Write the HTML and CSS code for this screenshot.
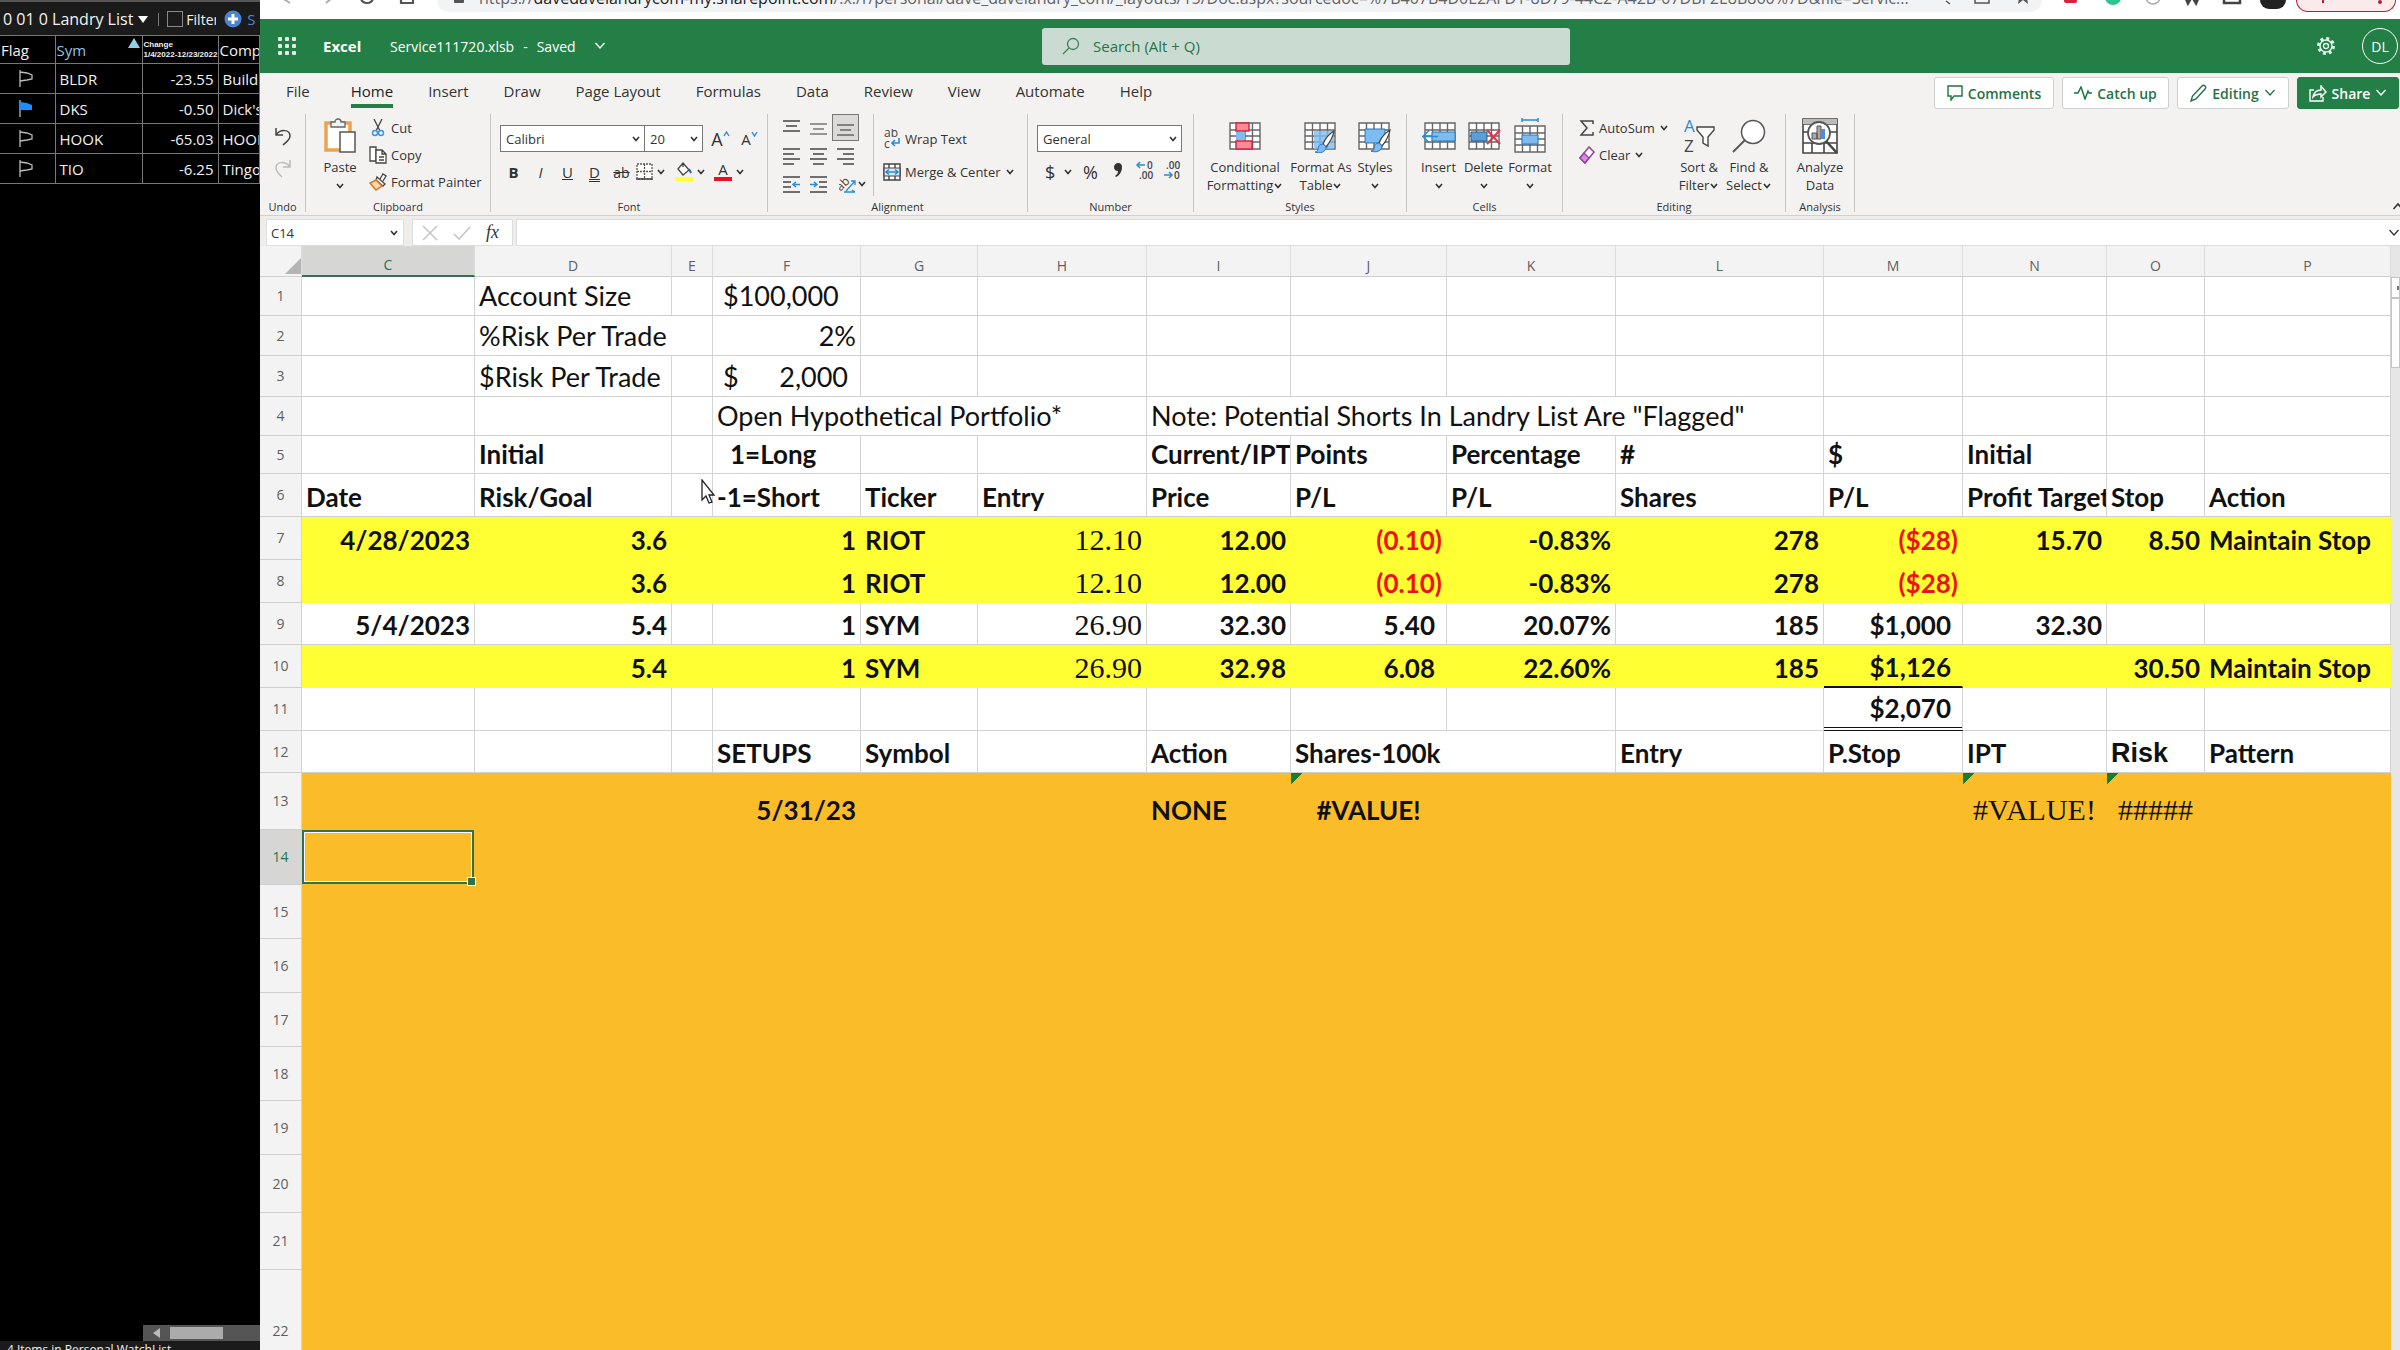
FILE: index.html
```
<!DOCTYPE html>
<html lang="en">
<head>
    <meta charset="UTF-8">
    <meta name="viewport" content="width=device-width, initial-scale=1.0">
    <title>Service111720.xlsb</title>
    <link rel="stylesheet" href="styles.css">
</head>
<body>
    <!-- Shared icons -->
    <svg class="defs" width="0" height="0" aria-hidden="true">
        <symbol id="chev" viewBox="0 0 10 8"><path d="M2 2l3 3.500 3-3.500" fill="none" stroke="currentColor" stroke-width="1.600"/></symbol>
        <symbol id="chevThin" viewBox="0 0 12 10"><path d="M1.500 2l4.500 5 4.500-5" fill="none" stroke="currentColor" stroke-width="1.300"/></symbol>
        <symbol id="flag" viewBox="0 0 16 20"><path d="M2 1v17M2 3l7 1 5 2v4l-5 1-7 1" fill="none" stroke="#bbb" stroke-width="1.300"/></symbol>
        <symbol id="grid" viewBox="0 0 32 28"><path d="M1 1h30v26H1zM1 8h30M1 14h30M1 20h30M8.500 1v26M16 1v26M23.500 1v26" fill="#fff" stroke="#666" stroke-width="1.400"/></symbol>
        <symbol id="brush" viewBox="0 0 20 24"><path d="M19 1C14 4 10 9 8 14l3 3c4-5 7-10 8-16z" fill="#fff" stroke="#444" stroke-width="1.300"/><path d="M8 14c-3 0-5 2-5 5 0 2-1 3-3 3 5 2 11 0 11-5z" fill="#7cbcf0" stroke="#2b78b8"/></symbol>
    </svg>

    <div class="screen">
        <!-- Watch list -->
        <aside class="watch">
            <div class="watch-bar">
                <button class="list-name">0 01 0 Landry List <span class="down"></span></button>
                <span class="bar-sep"></span>
                <label class="filter"><input type="checkbox"> Filter</label>
                <button class="add" aria-label="Add"><svg width="18" height="18" viewBox="0 0 18 18"><circle cx="9" cy="9" r="8.500" fill="#4a86cf"/><path d="M9 4v10M4 9h10" stroke="#fff" stroke-width="3"/></svg></button>
                <span class="cut-text">S</span>
            </div>
            <table class="watch-table">
                <colgroup><col class="w-flag"><col class="w-sym"><col class="w-chg"><col></colgroup>
                <thead>
                    <tr><th>Flag</th><th class="sorted">Sym<span class="up"></span></th><th class="chg">Change<br>1/4/2022-12/23/2022</th><th>Company</th></tr>
                </thead>
                <tbody>
                    <tr><td class="fl"><svg width="16" height="20"><use href="#flag"/></svg></td><td>BLDR</td><td class="n">-23.55</td><td class="co">Builders</td></tr>
                    <tr><td class="fl"><svg width="16" height="20" viewBox="0 0 16 20"><path d="M2 1v17" stroke="#bbb" stroke-width="1.300"/><path d="M2 3l7 1 5 2v5H2z" fill="#1e8cff"/></svg></td><td>DKS</td><td class="n">-0.50</td><td class="co">Dick's</td></tr>
                    <tr><td class="fl"><svg width="16" height="20"><use href="#flag"/></svg></td><td>HOOK</td><td class="n">-65.03</td><td class="co">HOOKIPA</td></tr>
                    <tr><td class="fl"><svg width="16" height="20"><use href="#flag"/></svg></td><td>TIO</td><td class="n">-6.25</td><td class="co">Tingo</td></tr>
                </tbody>
            </table>
            <div class="watch-space"></div>
            <div class="watch-scroll"><span class="left"></span><span class="thumb"></span></div>
            <div class="watch-status">4 Items in Personal WatchList</div>
        </aside>

        <main class="window">
            <!-- Browser bar -->
            <div class="browser">
                <div class="nav">
                    <svg width="150" height="18" viewBox="0 0 150 18"><path d="M14 3L6-2M50 3l6-5" fill="none" stroke="#aaa" stroke-width="1.800"/><path d="M85-2a6 5 0 0 0 12 0" fill="none" stroke="#555" stroke-width="2.200"/><path d="M125-6v9h12v-9" fill="none" stroke="#555" stroke-width="2.200"/></svg>
                </div>
                <div class="url">
                    <svg width="12" height="12" viewBox="0 0 12 12"><rect x="1" y="-6" width="10" height="9" rx="1" fill="#555"/></svg>
                    <span>https://<b>davedavelandrycom-my.sharepoint.com</b>/:x:/r/personal/dave_davelandry_com/_layouts/15/Doc.aspx?sourcedoc=%7B407B4D0E2AFD1-8D79-44C2-A42B-07DBF2E8B860%7D&amp;file=Servic...</span>
                    <svg class="url-tools" width="110" height="12" viewBox="0 0 110 12"><path d="M14 1l4 3M43-5v8h14v-8" fill="none" stroke="#555" stroke-width="1.500"/><path d="M86 4l5-4 5 4-1-6h-8z" fill="#555"/></svg>
                </div>
                <svg class="ext" width="184" height="18" viewBox="0 0 184 18"><rect x="0" y="-8" width="13" height="11" rx="2" fill="#d8213b"/><circle cx="49" cy="-3" r="8" fill="#2fc38d"/><circle cx="89" cy="-3" r="7" fill="none" stroke="#aaa" stroke-width="1.500"/><path d="M121-4l3 7 4-7 4 7 3-7" fill="none" stroke="#444" stroke-width="3"/><path d="M160-5h16v8h-16z" fill="none" stroke="#444" stroke-width="2.500"/></svg>
                <span class="face"></span>
                <span class="update"><svg width="98" height="12" viewBox="0 0 98 12"><path d="M26 0v3" stroke="#b5203a" stroke-width="2"/><circle cx="83" cy="2" r="2" fill="#b5203a"/></svg></span>
            </div>

            <!-- Title bar -->
            <header class="title">
                <button class="waffle" aria-label="App launcher"><svg width="18" height="18" viewBox="0 0 18 18" fill="#dff0e5"><rect width="4" height="4" rx="1"/><rect x="7" width="4" height="4" rx="1"/><rect x="14" width="4" height="4" rx="1"/><rect y="7" width="4" height="4" rx="1"/><rect x="7" y="7" width="4" height="4" rx="1"/><rect x="14" y="7" width="4" height="4" rx="1"/><rect y="14" width="4" height="4" rx="1"/><rect x="7" y="14" width="4" height="4" rx="1"/><rect x="14" y="14" width="4" height="4" rx="1"/></svg></button>
                <strong>Excel</strong>
                <button class="doc"><span>Service111720.xlsb</span><span>-</span><span>Saved</span><svg width="12" height="10"><use href="#chevThin"/></svg></button>
                <label class="search">
                    <svg width="18" height="18" viewBox="0 0 18 18"><circle cx="11" cy="7" r="5.500" fill="none" stroke="#3f7f5b" stroke-width="1.300"/><path d="M7 11l-6 6" stroke="#3f7f5b" stroke-width="1.300"/></svg>
                    <input type="text" placeholder="Search (Alt + Q)" aria-label="Search">
                </label>
                <button class="gear" aria-label="Settings"><svg width="20" height="20" viewBox="0 0 20 20" fill="none" stroke="#e4f3ea"><circle cx="10" cy="10" r="7.500" stroke-width="3" stroke-dasharray="3 2.890"/><circle cx="10" cy="10" r="6" stroke-width="1.500"/><circle cx="10" cy="10" r="2.500" stroke-width="1.300"/></svg></button>
                <button class="avatar">DL</button>
            </header>

            <!-- Ribbon tabs -->
            <nav class="tabs">
                <a class="file" href="#">File</a>
                <a class="active" href="#">Home</a>
                <a href="#">Insert</a>
                <a href="#">Draw</a>
                <a href="#">Page Layout</a>
                <a href="#">Formulas</a>
                <a href="#">Data</a>
                <a href="#">Review</a>
                <a href="#">View</a>
                <a href="#">Automate</a>
                <a href="#">Help</a>
                <div class="actions">
                    <button class="act w120"><svg width="16" height="16" viewBox="0 0 16 16"><path d="M1 1h14v10H7l-3 4v-4H1z" fill="none" stroke="currentColor" stroke-width="1.400"/></svg>Comments</button>
                    <button class="act w107"><svg width="18" height="14" viewBox="0 0 18 14"><path d="M0 7h4l3-6 4 12 3-8 1 2h3" fill="none" stroke="currentColor" stroke-width="1.500"/></svg>Catch up</button>
                    <button class="act w112"><svg width="17" height="18" viewBox="0 0 17 18"><path d="M1 17l1.500-5L12 2c1-1 2-1 3 0s1 2 0 3L6 15z" fill="none" stroke="currentColor" stroke-width="1.400"/></svg>Editing<svg width="12" height="10"><use href="#chevThin"/></svg></button>
                    <button class="act share"><svg width="18" height="17" viewBox="0 0 18 17"><path d="M5 5H1v11h13v-4M4 12c1-5 4-7 8-7V1l5 6-5 5V9c-4 0-6 1-8 3z" fill="none" stroke="currentColor" stroke-width="1.400"/></svg>Share<svg width="12" height="10"><use href="#chevThin"/></svg></button>
                </div>
            </nav>

            <!-- Ribbon -->
            <div class="ribbon">
                <section class="group g-undo">
                    <div class="body col">
                        <button class="tall" aria-label="Undo"><svg width="18" height="20" viewBox="0 0 18 20"><path d="M2 2v7h7M2 9c4-6 14-6 14 1 0 4-4 6-7 9" fill="none" stroke="#444" stroke-width="1.500"/></svg></button>
                        <button class="tall" aria-label="Redo"><svg width="18" height="20" viewBox="0 0 18 20"><path d="M16 2v7H9M16 9C12 3 2 3 2 10c0 4 3 6 6 9" fill="none" stroke="#bbb" stroke-width="1.500"/></svg></button>
                    </div>
                    <div class="label">Undo</div>
                </section>

                <section class="group g-clip">
                    <div class="body">
                        <button class="big w58"><span class="ico"><svg width="34" height="36" viewBox="0 0 34 36"><path d="M3 5h24v27H3z" fill="#fff" stroke="#eda24f" stroke-width="3.500"/><path d="M8 9V4h4c0-4 6-4 6 0h4v5z" fill="#f3f2f1" stroke="#666" stroke-width="1.300"/><rect x="17" y="14" width="15" height="20" fill="#fff" stroke="#555" stroke-width="1.500"/></svg></span>Paste<svg width="10" height="8"><use href="#chev"/></svg></button>
                        <div class="col">
                            <button class="line"><svg width="18" height="18" viewBox="0 0 18 18"><path d="M5 0l6 12M13 0L7 12" stroke="#444" stroke-width="1.300"/><circle cx="6" cy="14" r="2.500" fill="none" stroke="#3c96dc" stroke-width="1.400"/><circle cx="12" cy="14" r="2.500" fill="none" stroke="#3c96dc" stroke-width="1.400"/></svg>Cut</button>
                            <button class="line"><svg width="18" height="18" viewBox="0 0 18 18"><path d="M1 1h6v14H1z" fill="#fff" stroke="#444" stroke-width="1.300"/><path d="M7 4h6l4 4v9H7zM13 4v4h4M10 11h5M10 14h5" fill="#fff" stroke="#444" stroke-width="1.300"/></svg>Copy</button>
                            <button class="line"><svg width="18" height="18" viewBox="0 0 18 18"><path d="M11 6l3-5 3 2-3 5" fill="#fff" stroke="#444" stroke-width="1.300"/><path d="M8 4l8 7-2 2-7-6z" fill="#fff" stroke="#444" stroke-width="1.300"/><path d="M7 7L1 10l6 7 6-4z" fill="#fbd9b0" stroke="#dd7520" stroke-width="1.500"/></svg>Format Painter</button>
                        </div>
                    </div>
                    <div class="label">Clipboard</div>
                </section>

                <section class="group g-font">
                    <div class="body col pad">
                        <div class="row">
                            <div class="pick w144"><select aria-label="Font"><option>Calibri</option></select><svg width="10" height="8"><use href="#chev"/></svg></div>
                            <div class="pick size"><select aria-label="Font size"><option>20</option></select><svg width="10" height="8"><use href="#chev"/></svg></div>
                            <button class="b27 grow" aria-label="Increase font size">A<svg width="7" height="6" viewBox="0 0 7 6"><path d="M1 5l2.500-4L6 5" fill="none" stroke="#2d8bd3" stroke-width="1.400"/></svg></button>
                            <button class="b27 shrink" aria-label="Decrease font size">A<svg width="7" height="6" viewBox="0 0 7 6"><path d="M1 1l2.500 4L6 1" fill="none" stroke="#2d8bd3" stroke-width="1.400"/></svg></button>
                        </div>
                        <div class="row second">
                            <button class="b27"><b>B</b></button>
                            <button class="b27"><i>I</i></button>
                            <button class="b27"><u>U</u></button>
                            <button class="b27"><span class="dbl">D</span></button>
                            <button class="b27"><s>ab</s></button>
                            <button class="b38" aria-label="Borders"><svg width="17" height="17" viewBox="0 0 17 17"><path d="M1 1h15v15H1zM8.500 1v15M1 8.500h15" fill="#fff" stroke="#555" stroke-width="1.300" stroke-dasharray="2 1"/><path d="M0 16h17" stroke="#444" stroke-width="1.500"/></svg><svg width="10" height="8"><use href="#chev"/></svg></button>
                            <button class="b38" aria-label="Fill colour"><svg width="18" height="20" viewBox="0 0 18 20"><path d="M8 1l6 7-6 5-5-6zM8 1v4" fill="#fff" stroke="#444" stroke-width="1.300"/><path d="M14 7l2 4" stroke="#2b5fb8" stroke-width="2"/><path d="M0 15h18v4H0z" fill="#ff3"/></svg><svg width="10" height="8"><use href="#chev"/></svg></button>
                            <button class="b38" aria-label="Font colour"><span class="fcol">A</span><svg width="10" height="8"><use href="#chev"/></svg></button>
                        </div>
                    </div>
                    <div class="label">Font</div>
                </section>

                <section class="group g-align">
                    <div class="body">
                        <div class="aligns">
                            <button aria-label="Top align"><svg width="17" height="17" viewBox="0 0 17 17"><path d="M0 2h17M3 7h11M0 12h17" stroke="#444" stroke-width="1.500"/></svg></button>
                            <button aria-label="Middle align"><svg width="17" height="17" viewBox="0 0 17 17"><path d="M0 5h17M3 10h11M0 15h17" stroke="#777" stroke-width="1.300"/></svg></button>
                            <button class="on" aria-label="Bottom align"><svg width="17" height="17" viewBox="0 0 17 17"><path d="M0 6h17M3 11h11M0 16h17" stroke="#666" stroke-width="1.300"/></svg></button>
                            <button aria-label="Align left"><svg width="17" height="17" viewBox="0 0 17 17"><path d="M0 1h17M0 6h11M0 11h17M0 16h11" stroke="#444" stroke-width="1.400"/></svg></button>
                            <button aria-label="Center"><svg width="17" height="17" viewBox="0 0 17 17"><path d="M0 1h17M3 6h11M0 11h17M3 16h11" stroke="#444" stroke-width="1.400"/></svg></button>
                            <button aria-label="Align right"><svg width="17" height="17" viewBox="0 0 17 17"><path d="M0 1h17M6 6h11M0 11h17M6 16h11" stroke="#444" stroke-width="1.400"/></svg></button>
                            <button aria-label="Decrease indent"><svg width="17" height="17" viewBox="0 0 17 17"><path d="M0 1h17M0 6h8M0 11h8M0 16h17" stroke="#444" stroke-width="1.400"/><path d="M17 8.500h-6M13 6l-3 2.500 3 2.500" fill="none" stroke="#2d8bd3" stroke-width="1.500"/></svg></button>
                            <button aria-label="Increase indent"><svg width="17" height="17" viewBox="0 0 17 17"><path d="M0 1h17M9 6h8M9 11h8M0 16h17" stroke="#444" stroke-width="1.400"/><path d="M0 8.500h6M4 6l3 2.500L4 11" fill="none" stroke="#2d8bd3" stroke-width="1.500"/></svg></button>
                            <button class="orient" aria-label="Orientation"><svg width="18" height="18" viewBox="0 0 18 18"><text x="-3" y="12" transform="rotate(-45 5 9)" font-size="12" fill="#444">ab</text><path d="M7 16L16 6m-4 0h4v4M5 17h11m-3-2l3 2" fill="none" stroke="#2d8bd3" stroke-width="1.300"/></svg><svg width="10" height="8"><use href="#chev"/></svg></button>
                        </div>
                        <div class="col wrap">
                            <button class="line"><svg width="18" height="20" viewBox="0 0 18 20"><text x="1" y="8" font-size="12" fill="#444">ab</text><text x="1" y="19" font-size="12" fill="#444">c</text><path d="M16 9v5H9m3-3l-3 3 3 3" fill="none" stroke="#2d8bd3" stroke-width="1.600"/></svg>Wrap Text</button>
                            <button class="line"><svg width="18" height="18" viewBox="0 0 18 18"><path d="M1 1h16v16H1zM6 1v16M12 1v16" fill="#fff" stroke="#444" stroke-width="1.400"/><path d="M1 5h16v8H1z" fill="#d5eafa" stroke="#444" stroke-width="1.200"/><path d="M3 9h12M6 6.500L3 9l3 2.500M12 6.500L15 9l-3 2.500" fill="none" stroke="#2d8bd3" stroke-width="1.500"/></svg>Merge &amp; Center <svg width="10" height="8"><use href="#chev"/></svg></button>
                        </div>
                    </div>
                    <div class="label">Alignment</div>
                </section>

                <section class="group g-num">
                    <div class="body col pad">
                        <div class="row"><div class="pick w144"><select aria-label="Number format"><option>General</option></select><svg width="10" height="8"><use href="#chev"/></svg></div></div>
                        <div class="row second">
                            <button class="b38 sym">$<svg width="10" height="8"><use href="#chev"/></svg></button>
                            <button class="b27 pct">%</button>
                            <button class="b27" aria-label="Comma style"><svg width="10" height="16" viewBox="0 0 10 16"><path d="M5 1c3 0 4 2 4 4 0 4-2 8-6 10l-1-1c2-1 3-3 3-5-3 0-4-2-4-4s2-4 4-4z" fill="#333"/></svg></button>
                            <button class="b27" aria-label="Increase decimal"><svg width="18" height="20" viewBox="0 0 18 20"><text x="11" y="9" font-size="10" font-weight="600" fill="#444">0</text><text x="3" y="19" font-size="10" font-weight="600" fill="#444">.00</text><path d="M9 5H1m3-3L1 5l3 3" fill="none" stroke="#2d8bd3" stroke-width="1.500"/></svg></button>
                            <button class="b27" aria-label="Decrease decimal"><svg width="18" height="20" viewBox="0 0 18 20"><text x="3" y="9" font-size="10" font-weight="600" fill="#444">.00</text><text x="11" y="19" font-size="10" font-weight="600" fill="#444">0</text><path d="M1 15h8m-3-3l3 3-3 3" fill="none" stroke="#2d8bd3" stroke-width="1.500"/></svg></button>
                        </div>
                    </div>
                    <div class="label">Number</div>
                </section>

                <section class="group g-styles">
                    <div class="body">
                        <button class="big w84"><span class="ico"><svg width="32" height="28" viewBox="0 0 32 28"><use href="#grid"/><path d="M7 1h13v8H7zM7 19h16v8H7z" fill="#f98a96" stroke="#d2243c" stroke-width="1.400"/><path d="M7 10h9v8H7z" fill="#7cbcf0"/></svg></span>Conditional<span>Formatting<svg width="10" height="8"><use href="#chev"/></svg></span></button>
                        <button class="big w68"><span class="ico"><svg width="34" height="34" viewBox="0 0 34 34"><svg y="3" width="32" height="28"><use href="#grid"/></svg><path d="M10 12h20v18H10z" fill="#7cbcf0" opacity="0.800"/><svg x="9" y="11" width="24" height="24" viewBox="0 0 20 24"><use href="#brush"/></svg></svg></span>Format As<span>Table<svg width="10" height="8"><use href="#chev"/></svg></span></button>
                        <button class="big w40"><span class="ico"><svg width="34" height="34" viewBox="0 0 34 34"><svg y="3" width="32" height="28"><use href="#grid"/></svg><path d="M7 10h20v14H7z" fill="#7cbcf0" stroke="#2b78b8"/><svg x="11" y="10" width="24" height="24" viewBox="0 0 20 24"><use href="#brush"/></svg></svg></span>Styles<svg width="10" height="8"><use href="#chev"/></svg></button>
                    </div>
                    <div class="label">Styles</div>
                </section>

                <section class="group g-cells">
                    <div class="body">
                        <button class="big w45"><span class="ico"><svg width="34" height="28" viewBox="0 0 34 28"><svg x="2" width="32" height="28"><use href="#grid"/></svg><path d="M10 10h23v9H10z" fill="#7cbcf0" stroke="#2b78b8"/><path d="M16 14.500H1m6-6l-6 6 6 6" fill="none" stroke="#2d8bd3" stroke-width="1.600"/></svg></span>Insert<svg width="10" height="8"><use href="#chev"/></svg></button>
                        <button class="big w45"><span class="ico"><svg width="34" height="28" viewBox="0 0 34 28"><use href="#grid"/><path d="M4 10h16v9H4z" fill="#5a9fd8" stroke="#2b5f88"/><path d="M20 8l13 14M33 8L20 22" stroke="#e0334b" stroke-width="2"/></svg></span>Delete<svg width="10" height="8"><use href="#chev"/></svg></button>
                        <button class="big w48"><span class="ico"><svg width="32" height="36" viewBox="0 0 32 36"><svg y="7" width="32" height="28"><use href="#grid"/></svg><path d="M8 17h16v9H8z" fill="#7cbcf0" stroke="#2b78b8"/><path d="M8 2h16M8 0v4M24 0v4" stroke="#2d8bd3" stroke-width="1.500"/></svg></span>Format<svg width="10" height="8"><use href="#chev"/></svg></button>
                    </div>
                    <div class="label">Cells</div>
                </section>

                <section class="group g-edit">
                    <div class="body">
                        <div class="col w95">
                            <button class="line"><svg width="16" height="16" viewBox="0 0 16 16"><path d="M14 4V1H2l6 7-6 7h12v-3" fill="none" stroke="#444" stroke-width="1.500"/></svg>AutoSum <svg width="10" height="8"><use href="#chev"/></svg></button>
                            <button class="line"><svg width="16" height="18" viewBox="0 0 16 18"><path d="M1 12L10 1l5 5-9 11z" fill="#fff" stroke="#9b3aa5" stroke-width="1.500"/><path d="M1 12l4-5 5 5-4 5z" fill="#d58be0" stroke="#9b3aa5" stroke-width="1.300"/></svg>Clear<svg width="10" height="8"><use href="#chev"/></svg></button>
                        </div>
                        <button class="big w50"><span class="ico"><svg width="34" height="34" viewBox="0 0 34 34"><text x="2" y="13" font-size="17" fill="#2d8bd3">A</text><text x="2" y="33" font-size="17" fill="#444">Z</text><path d="M15 8h17v3l-6 7v9l-5-3v-6l-6-7z" fill="#fff" stroke="#444" stroke-width="1.400"/></svg></span>Sort &amp;<span>Filter<svg width="10" height="8"><use href="#chev"/></svg></span></button>
                        <button class="big w50"><span class="ico"><svg width="34" height="34" viewBox="0 0 34 34"><circle cx="21" cy="13" r="11.500" fill="#fff" stroke="#555" stroke-width="1.500"/><path d="M13 21L1 33" stroke="#555" stroke-width="1.800"/></svg></span>Find &amp;<span>Select<svg width="10" height="8"><use href="#chev"/></svg></span></button>
                    </div>
                    <div class="label">Editing</div>
                </section>

                <section class="group g-ana">
                    <div class="body">
                        <button class="big w68"><span class="ico"><svg width="36" height="36" viewBox="0 0 36 36"><path d="M1 1h34v34H1zM1 6h34M1 14h34M1 25h34M10 25v10M22 25v10" fill="#fff" stroke="#444" stroke-width="1.600"/><path d="M1 1h34v5H1z" fill="#bbb"/><circle cx="17" cy="15" r="11" fill="#fff" stroke="#555" stroke-width="1.800"/><path d="M24 23l11 12" stroke="#444" stroke-width="2.500"/><path d="M10 15h5v6h-5zM15 8h4v13h-4z" fill="#aaa" stroke="#555"/><path d="M19 11h4v10h-4z" fill="#4a90e2"/></svg></span>Analyze<span>Data</span></button>
                    </div>
                    <div class="label">Analysis</div>
                </section>
                <button class="collapse" aria-label="Collapse ribbon"><svg width="12" height="10" viewBox="0 0 12 10"><path d="M1.500 8L6 3l4.500 5" fill="none" stroke="#333" stroke-width="1.600"/></svg></button>
            </div>

            <!-- Formula bar -->
            <div class="formula">
                <div class="name-box"><input type="text" value="C14" aria-label="Name box"><svg width="10" height="8"><use href="#chev"/></svg></div>
                <div class="fx">
                    <button aria-label="Cancel"><svg width="16" height="16" viewBox="0 0 16 16"><path d="M1 1l14 14M15 1L1 15" stroke="#c4c4c4" stroke-width="1.500"/></svg></button>
                    <button aria-label="Enter"><svg width="18" height="14" viewBox="0 0 18 14"><path d="M1 8l5 5L17 1" fill="none" stroke="#c4c4c4" stroke-width="1.500"/></svg></button>
                    <button class="fn">fx</button>
                </div>
                <input class="formula-input" type="text" aria-label="Formula">
                <svg class="expand" width="12" height="10"><use href="#chevThin"/></svg>
            </div>

            <!-- Sheet -->
            <div class="sheet">
                <table class="cells">
                    <colgroup>
                        <col class="c-head"><col class="c-c"><col class="c-d"><col class="c-e"><col class="c-f"><col class="c-g"><col class="c-h"><col class="c-i"><col class="c-j"><col class="c-k"><col class="c-l"><col class="c-m"><col class="c-n"><col class="c-o"><col>
                    </colgroup>
                    <thead>
                        <tr><th class="corner"><span></span></th><th class="sel">C</th><th>D</th><th>E</th><th>F</th><th>G</th><th>H</th><th>I</th><th>J</th><th>K</th><th>L</th><th>M</th><th>N</th><th>O</th><th class="cut">P</th></tr>
                    </thead>
                    <tbody>
                        <tr><th>1</th><td></td><td>Account Size</td><td></td><td class="acct">$100,000</td><td></td><td></td><td></td><td></td><td></td><td></td><td></td><td></td><td></td><td></td></tr>
                        <tr><th>2</th><td></td><td colspan="2">%Risk Per Trade</td><td class="r">2%</td><td></td><td></td><td></td><td></td><td></td><td></td><td></td><td></td><td></td><td></td></tr>
                        <tr><th>3</th><td></td><td>$Risk Per Trade</td><td></td><td class="acct"><div class="money"><span>$</span><span>2,000</span></div></td><td></td><td></td><td></td><td></td><td></td><td></td><td></td><td></td><td></td><td></td></tr>
                        <tr><th>4</th><td></td><td></td><td></td><td colspan="3">Open Hypothetical Portfolio*</td><td colspan="4">Note: Potential Shorts In Landry List Are "Flagged"</td><td></td><td></td><td></td><td></td></tr>
                        <tr class="bold"><th>5</th><td></td><td>Initial</td><td></td><td class="indent">1=Long</td><td></td><td></td><td>Current/IPT</td><td>Points</td><td>Percentage</td><td>#</td><td>$</td><td>Initial</td><td></td><td></td></tr>
                        <tr class="bold"><th>6</th><td>Date</td><td>Risk/Goal</td><td></td><td>-1=Short</td><td>Ticker</td><td>Entry</td><td>Price</td><td>P/L</td><td>P/L</td><td>Shares</td><td>P/L</td><td>Profit Target</td><td>Stop</td><td>Action</td></tr>
                        <tr class="bold yellow"><th>7</th><td class="r">4/28/2023</td><td class="r">3.6</td><td></td><td class="r">1</td><td>RIOT</td><td class="r serif">12.10</td><td class="r">12.00</td><td class="r red">(0.10)</td><td class="r">-0.83%</td><td class="r">278</td><td class="r red">($28)</td><td class="r">15.70</td><td class="r">8.50</td><td>Maintain Stop</td></tr>
                        <tr class="bold yellow"><th>8</th><td></td><td class="r">3.6</td><td></td><td class="r">1</td><td>RIOT</td><td class="r serif">12.10</td><td class="r">12.00</td><td class="r red">(0.10)</td><td class="r">-0.83%</td><td class="r">278</td><td class="r red">($28)</td><td></td><td></td><td></td></tr>
                        <tr class="bold"><th>9</th><td class="r">5/4/2023</td><td class="r">5.4</td><td></td><td class="r">1</td><td>SYM</td><td class="r serif">26.90</td><td class="r">32.30</td><td class="r pos">5.40</td><td class="r">20.07%</td><td class="r">185</td><td class="r pos">$1,000</td><td class="r">32.30</td><td></td><td></td></tr>
                        <tr class="bold yellow"><th>10</th><td></td><td class="r">5.4</td><td></td><td class="r">1</td><td>SYM</td><td class="r serif">26.90</td><td class="r">32.98</td><td class="r pos">6.08</td><td class="r">22.60%</td><td class="r">185</td><td class="r pos last">$1,126</td><td></td><td class="r">30.50</td><td>Maintain Stop</td></tr>
                        <tr class="bold"><th>11</th><td></td><td></td><td></td><td></td><td></td><td></td><td></td><td></td><td></td><td></td><td class="r pos total">$2,070</td><td></td><td></td><td></td></tr>
                        <tr class="bold"><th>12</th><td></td><td></td><td></td><td>SETUPS</td><td>Symbol</td><td></td><td>Action</td><td colspan="2">Shares-100k</td><td>Entry</td><td>P.Stop</td><td>IPT</td><td class="sans">Risk</td><td>Pattern</td></tr>
                        <tr class="bold orange"><th>13</th><td></td><td></td><td></td><td class="r">5/31/23</td><td></td><td></td><td>NONE</td><td class="mid err">#VALUE!</td><td></td><td></td><td></td><td class="mid err serif">#VALUE!</td><td class="mid err serif">#####</td><td></td></tr>
                        <tr class="orange"><th class="sel">14</th><td class="picked"><div class="cursor-box"></div></td><td colspan="13"></td></tr>
                        <tr class="orange"><th>15</th><td colspan="14"></td></tr>
                        <tr class="orange"><th>16</th><td colspan="14"></td></tr>
                        <tr class="orange"><th>17</th><td colspan="14"></td></tr>
                        <tr class="orange"><th>18</th><td colspan="14"></td></tr>
                        <tr class="orange"><th>19</th><td colspan="14"></td></tr>
                        <tr class="orange"><th>20</th><td colspan="14"></td></tr>
                        <tr class="orange"><th>21</th><td colspan="14"></td></tr>
                        <tr class="orange"><th>22</th><td colspan="14"></td></tr>
                    </tbody>
                </table>
                <div class="scroll"><span class="scroll-up"></span><span class="scroll-thumb"></span></div>
                <svg class="pointer" width="14" height="26" viewBox="0 0 14 26"><path d="M1 1v20l4-4 3 7 3-1-3-7h5z" fill="#fff" stroke="#222" stroke-width="1.300"/></svg>
            </div>
        </main>
    </div>
</body>
</html>
```
FILE: styles.css
```
* {
    box-sizing: border-box;
}
body {
    margin: 0;
    height: 100vh;
    overflow: hidden;
    font-family: "Open Sans", "Noto Sans", sans-serif;
    font-size: 13px;
    color: #333;
    background-color: #000;
}
button {
    font: inherit;
    color: inherit;
    background: none;
    border: 0;
    padding: 0;
    cursor: pointer;
}
input, select {
    font: inherit;
    color: inherit;
}
svg {
    flex: none;
}
.defs {
    position: absolute;
}
.screen {
    display: flex;
    height: 100vh;
}

/* Watch list */
.watch {
    width: 260px;
    flex: none;
    display: flex;
    flex-direction: column;
    overflow: hidden;
    color: #f2f2f2;
    font-family: "Open Sans", "Noto Sans", sans-serif;
    font-size: 15px;
}
.watch-bar {
    display: flex;
    align-items: center;
    height: 35px;
    padding: 1px 0 0 3px;
    background-color: #1b1b1b;
    border-top: 2px solid #555;
    white-space: nowrap;
}
.list-name {
    display: flex;
    align-items: center;
    gap: 5px;
    font-size: 16px;
}
.down {
    border: 5px solid transparent;
    border-top: 7px solid #fff;
    border-bottom: 0;
}
.bar-sep {
    width: 1px;
    height: 13px;
    margin: 0 8px 0 10px;
    background-color: #777;
}
.filter {
    display: flex;
    align-items: center;
    gap: 3px;
    width: 49px;
    overflow: hidden;
    font-size: 14px;
}
.filter input {
    appearance: none;
    flex: none;
    width: 16px;
    height: 16px;
    margin: 0;
    border: 1px solid #888;
}
.add {
    display: flex;
    margin: 0 5px 0 8px;
}
.cut-text {
    color: #4a86cf;
}
.watch-table {
    width: 100%;
    table-layout: fixed;
    border-collapse: collapse;
}
.w-flag { width: 55px; }
.w-sym { width: 87px; }
.w-chg { width: 76px; }
.watch-table th, .watch-table td {
    height: 30px;
    padding: 0 4px;
    border: 1px solid #777;
    border-left: 0;
    text-align: left;
    font-weight: normal;
    overflow: hidden;
    white-space: nowrap;
}
.watch-table th {
    height: 28px;
    padding: 0 1px;
}
.watch-table .sorted {
    position: relative;
    color: #8cc4e6;
}
.up {
    position: absolute;
    right: 2px;
    top: 2px;
    border: 6px solid transparent;
    border-top: 0;
    border-bottom: 10px solid #8fd0e8;
}
.watch-table .chg {
    font: bold 8px/10px "Liberation Sans Narrow", "Liberation Sans", sans-serif;
}
.watch-table .n {
    text-align: right;
}
.watch-table .fl {
    padding-left: 18px;
}
.fl svg {
    display: block;
}
.watch-space {
    flex: 1;
}
.watch-scroll {
    display: flex;
    align-items: center;
    gap: 10px;
    height: 16px;
    margin-left: 143px;
    padding-left: 10px;
    background-color: #555;
}
.left {
    border: 5px solid transparent;
    border-left: 0;
    border-right: 7px solid #bbb;
}
.thumb {
    width: 53px;
    height: 12px;
    background-color: #ababab;
}
.watch-status {
    height: 9px;
    padding-left: 7px;
    line-height: 17px;
    font-size: 12px;
    background-color: #1b1b1b;
    overflow: hidden;
}

/* Browser bar */
.window {
    flex: 1;
    min-width: 0;
    display: flex;
    flex-direction: column;
    background-color: #f3f2f1;
}
.browser {
    display: flex;
    height: 19px;
    background-color: #fff;
    overflow: hidden;
}
.nav {
    width: 177px;
    padding-left: 16px;
}
.url {
    flex: 1;
    display: flex;
    gap: 14px;
    height: 12px;
    padding-left: 16px;
    border-radius: 0 0 14px 14px;
    background-color: #f1f3f4;
    white-space: nowrap;
    color: #5f6368;
}
.url span {
    flex: 1;
    overflow: hidden;
    margin-top: -13px;
    font-size: 16px;
    line-height: 22px;
}
.url b {
    font-weight: normal;
    color: #202124;
}
.ext {
    margin-left: 22px;
}
.face {
    width: 26px;
    height: 9px;
    margin-left: 12px;
    border-radius: 0 0 13px 13px;
    background-color: #222;
}
.update {
    width: 100px;
    height: 12px;
    margin: 0 4px 0 10px;
    border: 1px solid #b5203a;
    border-top: 0;
    border-radius: 0 0 14px 14px;
    background-color: #fbeaec;
}
.update svg {
    display: block;
}

/* Title bar */
.title {
    display: flex;
    align-items: center;
    height: 54px;
    padding-left: 18px;
    color: #fff;
    background-color: #237f46;
    font-size: 14px;
}
.waffle {
    display: flex;
    margin-right: 27px;
}
.title strong {
    width: 67px;
    font-size: 15px;
}
.doc {
    display: flex;
    align-items: center;
    gap: 9px;
    width: 652px;
}
.doc svg {
    margin-left: 9px;
}
.search {
    display: flex;
    align-items: center;
    gap: 13px;
    width: 528px;
    height: 37px;
    padding-left: 20px;
    border-radius: 3px;
    background-color: #cadcd1;
    font-size: 15px;
}
.search input {
    flex: 1;
    border: 0;
    padding: 0;
    background: none;
    outline: none;
}
.search input::placeholder {
    color: #2c7249;
}
.gear {
    display: flex;
    margin: 0 26px 0 auto;
}
.avatar {
    width: 36px;
    height: 36px;
    margin-right: 2px;
    border: 1px solid #fff;
    border-radius: 50%;
}

/* Tabs */
.tabs {
    display: flex;
    gap: 35px;
    height: 41px;
    padding-left: 26px;
    font-size: 15px;
}
.tabs a {
    height: 35px;
    line-height: 36px;
    color: #333;
    text-decoration: none;
    white-space: nowrap;
}
.tabs .file {
    margin-right: 6px;
}
.tabs .active {
    border-bottom: 4px solid #237f46;
    color: #222;
}
.actions {
    display: flex;
    gap: 8px;
    margin: 4px 1px 0 auto;
    font-size: 14px;
}
.act {
    display: flex;
    align-items: center;
    justify-content: center;
    gap: 5px;
    height: 32px;
    border: 1px solid #d0d0d0;
    border-radius: 3px;
    color: #1f7344;
    background-color: #fff;
    font-weight: 600;
}
.w120 { width: 120px; }
.w107 { width: 107px; }
.w112 { width: 112px; }
.share {
    width: 102px;
    border-color: #237f46;
    color: #fff;
    background-color: #237f46;
}

/* Ribbon */
.ribbon {
    display: flex;
    height: 102px;
    border-bottom: 1px solid #d2d0ce;
}
.group {
    height: 98px;
    border-right: 1px solid #c8c6c4;
}
.g-undo { width: 46px; }
.g-clip { width: 185px; }
.g-font { width: 277px; }
.g-align { width: 260px; }
.g-num { width: 166px; }
.g-styles { width: 213px; }
.g-cells { width: 156px; }
.g-edit { width: 223px; }
.g-ana { width: 69px; }
.body {
    display: flex;
    height: 86px;
}
.label {
    line-height: 14px;
    font-size: 11px;
    text-align: center;
}
.col {
    display: flex;
    flex-direction: column;
}
.row {
    display: flex;
    height: 27px;
}
.second {
    margin-top: 6px;
}
.pad {
    padding: 11px 0 0 9px;
}
.tall {
    height: 32px;
}
.g-undo .col {
    padding-top: 8px;
}
.big {
    display: flex;
    flex-direction: column;
    align-items: center;
    line-height: 18px;
    white-space: nowrap;
}
.big > svg {
    margin-top: 6px;
}
.ico {
    display: flex;
    align-items: center;
    height: 44px;
}
.w40 { width: 40px; }
.w45 { width: 45px; }
.w48 { width: 48px; }
.w50 { width: 50px; }
.w58 { width: 58px; }
.w68 { width: 68px; }
.w84 { width: 84px; }
.w95 { width: 95px; }
.g-clip .body {
    padding-left: 5px;
}
.line {
    display: flex;
    align-items: center;
    gap: 4px;
    height: 27px;
    white-space: nowrap;
}
.pick {
    display: flex;
    align-items: center;
    position: relative;
}
.pick select {
    appearance: none;
    width: 100%;
    height: 27px;
    padding: 0 5px;
    border: 1px solid #777;
    border-radius: 0;
    background-color: #fff;
}
.pick svg {
    position: absolute;
    right: 4px;
}
.w144 {
    width: 145px;
}
.size {
    width: 59px;
    margin-left: -1px;
}
.b27 {
    width: 27px;
    height: 27px;
    font-size: 15px;
}
.b38 {
    display: flex;
    align-items: center;
    gap: 3px;
    width: 38px;
    font-size: 15px;
}
.b27 s {
    font-size: 14px;
}
.dbl {
    text-decoration: underline double;
}
.grow, .shrink {
    display: flex;
    justify-content: center;
    align-items: center;
}
.grow {
    margin-left: 4px;
    font-size: 18px;
}
.grow svg, .shrink svg {
    margin-bottom: 10px;
}
.shrink {
    margin-left: 2px;
}
.g-font .b38 {
    margin-left: 1px;
}
.g-font .b38:first-of-type {
    margin-left: 6px;
}
.fcol {
    width: 18px;
    line-height: 15px;
    border-bottom: 4px solid #e81123;
}
.aligns {
    display: grid;
    grid-template-columns: 27px 27px 27px;
    grid-template-rows: 27px 31px 24px;
    width: 106px;
    height: 82px;
    padding-left: 10px;
    border-right: 1px solid #c8c6c4;
}
.aligns button {
    display: flex;
    align-items: center;
    justify-content: center;
}
.aligns .on {
    border: 1px solid #777;
    background-color: #dcdad8;
}
.aligns .orient {
    width: 42px;
}
.wrap {
    gap: 6px;
    padding: 11px 0 0 9px;
}
.sym, .pct {
    font-size: 18px;
}
.sym {
    gap: 8px;
    padding-left: 8px;
}
.pct {
    margin-left: 2px;
}
.g-styles .body, .g-cells .body {
    padding-left: 9px;
}
.g-edit .body {
    padding-left: 16px;
}
.collapse {
    align-self: flex-end;
    height: 18px;
    width: 12px;
    margin: 0 -4px 0 auto;
}

/* Formula bar */
.formula {
    display: flex;
    position: relative;
    height: 30px;
    padding: 3px 0 0 6px;
    background-color: #eeedec;
}
.name-box, .fx, .formula-input {
    display: flex;
    align-items: center;
    border: 1px solid #dedede;
    background-color: #fff;
}
.name-box {
    width: 138px;
    margin-right: 8px;
    padding: 0 4px;
}
.name-box input {
    width: 118px;
    padding: 0;
    border: 0;
    outline: none;
}
.fx {
    width: 101px;
    margin-right: 3px;
    padding-left: 9px;
    gap: 15px;
}
.fx button {
    display: flex;
}
.fx .fn {
    font: italic 18px "Liberation Serif", serif;
}
.formula-input {
    flex: 1;
    border-right: 0;
}
.expand {
    position: absolute;
    right: 0;
    top: 12px;
}

/* Sheet */
.sheet {
    position: relative;
    display: flex;
    align-items: flex-start;
    flex: 1;
    min-height: 0;
    overflow: hidden;
}
.cells {
    flex: 1;
    width: 100%;
    table-layout: fixed;
    border-spacing: 0;
    background-color: #fff;
    color: #111;
    font-family: Lato, Calibri, sans-serif;
    font-size: 27px;
    line-height: 30px;
}
.c-head { width: 42px; }
.c-c { width: 173px; }
.c-d { width: 197px; }
.c-e { width: 41px; }
.c-f { width: 148px; }
.c-g { width: 117px; }
.c-h { width: 169px; }
.c-i { width: 144px; }
.c-j { width: 156px; }
.c-k { width: 169px; }
.c-l { width: 208px; }
.c-m { width: 139px; }
.c-n { width: 144px; }
.c-o { width: 98px; }
.cells th {
    padding: 0;
    border-right: 1px solid #d4d4d4;
    border-bottom: 1px solid #cfcfcf;
    background-color: #f3f3f3;
    color: #5f5f5f;
    font: 14px/18px "Open Sans", sans-serif;
    vertical-align: middle;
}
.cells thead th {
    height: 31px;
    padding-top: 9px;
    border-right-color: #dcdcdc;
}
.cells thead th.sel {
    border-bottom: 2px solid #2e7350;
}
.cells thead .cut {
    padding-left: 20px;
}
.cells th.sel {
    background-color: #d6d6d5;
    color: #2e7350;
}
.corner span {
    display: block;
    width: 0;
    margin-left: auto;
    border: 8px solid transparent;
    border-right-color: #b4b4b4;
    border-bottom-color: #b4b4b4;
}
.cells td {
    height: 43px;
    padding: 0 4px 4px 4px;
    border-right: 1px solid #d4d4d4;
    border-bottom: 1px solid #d0d0d0;
    vertical-align: bottom;
    white-space: nowrap;
    overflow: hidden;
}
.cells tbody tr:nth-child(1) td { height: 39px; }
.cells tbody tr:nth-child(2) td { height: 40px; }
.cells tbody tr:nth-child(3) td { height: 41px; }
.cells tbody tr:nth-child(4) td { height: 39px; }
.cells tbody tr:nth-child(5) td { height: 38px; }
.cells tbody tr:nth-child(9) td { height: 42px; }
.cells tbody tr:nth-child(12) td { height: 42px; }
.cells tbody tr:nth-child(13) td { height: 57px; }
.cells tbody tr:nth-child(14) td { height: 55px; }
.cells tbody tr:nth-child(n+15) td { height: 54px; }
.cells tbody tr:nth-child(20) td { height: 58px; }
.cells tbody tr:nth-child(21) td { height: 57px; }
.cells tbody tr:nth-child(22) td { height: 122px; }
.cells .bold td {
    font-size: 26px;
    font-weight: bold;
}
.cells .yellow td {
    border-color: #ffff33;
    background-color: #ffff33;
}
.cells .orange td {
    border-color: #fabd29;
    background-color: #fabd29;
}
.cells .r {
    text-align: right;
}
.cells .mid {
    text-align: center;
}
.cells .pos {
    padding-right: 11px;
}
.cells .red {
    color: #f01010;
}
.cells .acct {
    padding: 0 12px 4px 10px;
}
.cells .indent {
    padding-left: 17px;
}
.money {
    display: flex;
    justify-content: space-between;
}
.cells .bold .serif {
    font-family: "Liberation Serif", serif;
    font-size: 30px;
    font-weight: normal;
}
.cells .bold .sans {
    font-family: "Liberation Sans", sans-serif;
    font-size: 27px;
}
.cells .yellow .last {
    border-bottom: 2px solid #111;
}
.cells .total {
    border-bottom: 4px double #111;
}
.cells .err {
    background-image: linear-gradient(135deg, #1d7a2c 8px, transparent 8px);
}
.cells .picked {
    padding: 0;
    overflow: visible;
}
.cursor-box {
    position: relative;
    height: 54px;
    border: 2px solid #2e7350;
    outline: 1px solid #fff;
    outline-offset: -3px;
}
.cursor-box::after {
    content: "";
    position: absolute;
    right: -4px;
    bottom: -4px;
    width: 7px;
    height: 7px;
    border: 1px solid #fff;
    background-color: #2e7350;
}
.scroll {
    display: flex;
    flex-direction: column;
    flex: none;
    align-self: stretch;
    width: 9px;
    padding-top: 31px;
    background-color: #e6e6e6;
    overflow: hidden;
}
.scroll-up {
    height: 21px;
    border: 1px solid #c4c4c4;
    background: linear-gradient(#777, #777) 5px 8px / 3px 4px no-repeat #fff;
}
.scroll-thumb {
    height: 70px;
    border: 1px solid #c4c4c4;
    background-color: #fff;
}
.pointer {
    position: absolute;
    left: 441px;
    top: 233px;
}
```
